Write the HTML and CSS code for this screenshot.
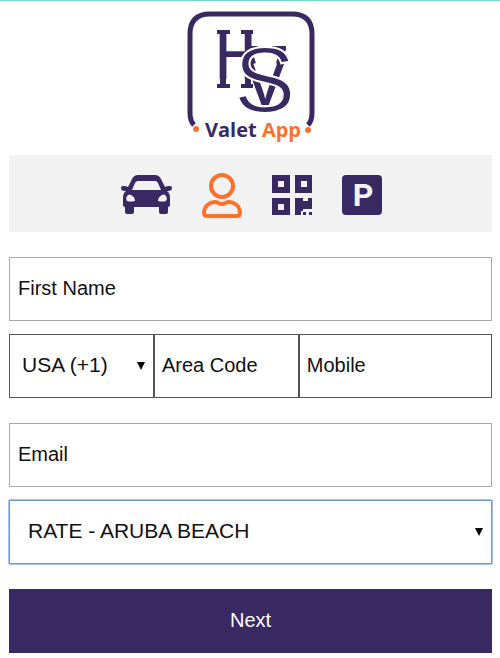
FILE: index.html
```html
<!DOCTYPE html>
<html lang="en">
<head>
<meta charset="utf-8">
<meta name="viewport" content="width=device-width, initial-scale=1">
<title>HVS Valet App</title>
<link rel="stylesheet" href="styles.css">
</head>
<body>
<main class="page">
  <header class="brand">
    <svg class="logo" viewBox="0 0 130 134" role="img" aria-label="HVS Valet App">
      <path class="frame" d="M8 115Q4 111 4 103V24Q4 4 24 4H106Q126 4 126 24V103Q126 111 122 115"/>
      <g class="monogram">
        <text class="letter-h" x="28" y="69">H</text>
        <path class="serif" d="M31 22H44M55 22H67M31 76H44M55 76H67"/>
        <path class="stem" d="M37 22V30M62 22V30M37 66V76M62 66V76"/>
        <text class="letter-v" x="57" y="95">V</text>
        <path class="serif" d="M60 38H72M86 38H100"/>
        <path class="stem" d="M62 38L67 54M97 38L93 54"/>
        <text class="letter-s" x="48" y="102">S</text>
      </g>
      <circle class="dot" cx="10" cy="119" r="3"/>
      <circle class="dot" cx="122" cy="120" r="3"/>
      <text class="wordmark" x="67" y="127" text-anchor="middle">Valet <tspan class="accent">App</tspan></text>
    </svg>
  </header>

  <nav class="steps" aria-label="Steps">
    <svg class="icon-car" viewBox="0 0 51 40" role="img" aria-label="Vehicle">
      <path fill-rule="evenodd" d="M17 0H34Q38 0 40 4L44 12Q45 11 49 11Q51 11 51 13Q51 16 47 16H46Q49 18 49 23V30Q49 32 47 32V37Q47 39 45 39H40Q38 39 38 37V32H13V37Q13 39 11 39H6Q4 39 4 37V32Q2 32 2 30V23Q2 18 5 16H4Q0 16 0 13Q0 11 2 11Q6 11 7 12L11 4Q13 0 17 0ZM17 6Q15 6 14 8L11 15H40L37 8Q36 6 34 6ZM7 20Q4 23 6 26Q9 27 14 26Q14 22 10 20Q8 19 7 20ZM44 20Q47 23 45 26Q42 27 37 26Q37 22 41 20Q43 19 44 20Z"/>
    </svg>
    <svg class="icon-user" viewBox="0 -2 40 48" role="img" aria-label="Guest">
      <circle cx="20" cy="13" r="11"/>
      <path d="M13 29C9 29 2 32 2 40Q2 43 5 43H35Q38 43 38 40C38 32 31 29 27 29C24 29 23 31 20 31S16 29 13 29Z"/>
    </svg>
    <svg class="icon-qr" viewBox="0 0 40 40" role="img" aria-label="QR code">
      <path fill-rule="evenodd" d="M0 0H18V18H0ZM6 6V12H12V6ZM23 0H40V18H23ZM29 6V12H35V6ZM0 23H18V40H0ZM6 29V35H12V29ZM23 23H31V26H36V23H40V34H31V36H29V40H23ZM31 37H34V40H31ZM37 37H40V40H37Z"/>
    </svg>
    <svg class="icon-park" viewBox="0 0 40 40" role="img" aria-label="Parking">
      <rect width="40" height="40" rx="4"/>
      <text x="21" y="31" text-anchor="middle">P</text>
    </svg>
  </nav>

  <form class="form" action="#">
    <input class="field" type="text" aria-label="First Name" placeholder="First Name">
    <div class="phone">
      <div class="select">
        <select class="field" aria-label="Country code"><option>USA (+1)</option></select>
        <svg class="arrow" viewBox="0 0 8 8" aria-hidden="true"><path d="M0 0H8L4 8Z"/></svg>
      </div>
      <input class="field" type="tel" aria-label="Area Code" placeholder="Area Code">
      <input class="field" type="tel" aria-label="Mobile" placeholder="Mobile">
    </div>
    <input class="field" type="email" aria-label="Email" placeholder="Email">
    <div class="select rate">
      <select class="field" aria-label="Rate"><option>RATE - ARUBA BEACH</option></select>
      <svg class="arrow" viewBox="0 0 8 8" aria-hidden="true"><path d="M0 0H8L4 8Z"/></svg>
    </div>
    <button class="next" type="submit">Next</button>
  </form>
</main>
</body>
</html>
```
FILE: styles.css
```css
:root {
  --purple: #392963;
  --orange: #ff702d;
}

* {
  box-sizing: border-box;
}

body {
  margin: 0;
  border-top: 1px solid #76d8cc;
  background: #fff;
  font-family: "Liberation Sans", Arial, sans-serif;
  font-size: 20px;
  color: #111;
}

.page {
  padding: 9px 8px 5px 9px;
}

.brand {
  display: flex;
  justify-content: center;
  margin-bottom: 11px;
}

.logo {
  width: 130px;
  height: 134px;
}

.frame {
  fill: none;
  stroke: var(--purple);
  stroke-width: 5;
}

.monogram text {
  fill: var(--purple);
}

.letter-h {
  font-family: "Liberation Mono", monospace;
  font-size: 72px;
}

.letter-v {
  font-family: "Liberation Mono", monospace;
  font-size: 74px;
}

.monogram .letter-s {
  font-family: "Liberation Sans", Arial, sans-serif;
  font-size: 92px;
  stroke: #fff;
  stroke-width: 2px;
}

.serif {
  fill: none;
  stroke: var(--purple);
  stroke-width: 4;
}

.stem {
  fill: none;
  stroke: var(--purple);
  stroke-width: 6;
}

.dot,
.accent {
  fill: var(--orange);
}

.wordmark {
  fill: var(--purple);
  font-family: "Open Sans", "Noto Sans", sans-serif;
  font-size: 20px;
  font-weight: 700;
}

.steps {
  display: flex;
  justify-content: center;
  align-items: center;
  gap: 30px;
  height: 77px;
  margin-bottom: 25px;
  padding: 3px 0 0 1px;
  background: #f2f2f2;
  fill: var(--purple);
}

.icon-car {
  width: 51px;
  height: 40px;
}

.icon-user {
  width: 40px;
  height: 48px;
  fill: none;
  stroke: var(--orange);
  stroke-width: 4;
}

.icon-qr,
.icon-park {
  width: 40px;
  height: 40px;
}

.icon-park text {
  fill: #f2f2f2;
  font-family: Roboto, "Liberation Sans", sans-serif;
  font-size: 32px;
  font-weight: 700;
}

.form {
  display: flex;
  flex-direction: column;
}

.field {
  display: block;
  width: 100%;
  height: 64px;
  margin: 0;
  padding: 0 8px 2px;
  border: 1px solid #a9a9a9;
  border-radius: 0;
  background: #fff;
  font: inherit;
  color: inherit;
  appearance: none;
}

.field::placeholder {
  color: inherit;
  opacity: 1;
}

.phone {
  display: grid;
  grid-template-columns: 3fr 3fr 4fr;
  margin: 13px 0 25px;
}

.phone .field {
  border-color: #555;
  padding: 0 7px 2px;
}

.select {
  display: grid;
  align-items: center;
  font-size: 21px;
}

.select > * {
  grid-area: 1 / 1;
}

.phone .select .field {
  padding: 0 12px 4px;
}

.arrow {
  justify-self: end;
  width: 8px;
  height: 8px;
  margin-right: 9px;
  fill: #000;
  pointer-events: none;
}

.rate {
  margin: 13px 0 25px;
}

.rate .field {
  padding: 0 18px 4px;
  border-color: #6f94dc;
  border-radius: 1px;
  box-shadow: 0 0 0 1px #a5c3f8;
}

.next {
  height: 64px;
  padding: 0 0 2px;
  border: 0;
  background: var(--purple);
  font: inherit;
  color: #fff;
}
```
